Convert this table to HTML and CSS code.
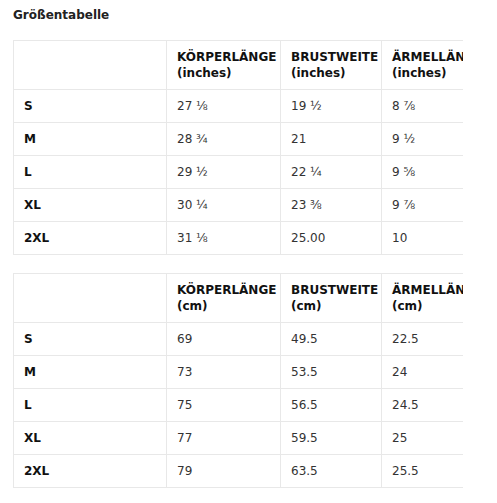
FILE: index.html
```html
<!DOCTYPE html>
<html lang="de">
  <head>
    <meta charset="UTF-8" />
    <meta name="viewport" content="width=device-width, initial-scale=1.0" />
    <title>Größentabelle</title>
    <link rel="stylesheet" href="styles.css">
  </head>
  <body>
    <div class="container">
      <h3 class="title">Größentabelle</h3>
      <div class="table-wrap">
        <table class="size-table">
          <colgroup>
            <col class="col-size" />
            <col class="col-body" />
            <col class="col-chest" />
            <col class="col-sleeve" />
          </colgroup>
          <thead>
            <tr>
              <th></th>
              <th>KÖRPERLÄNGE<br />(inches)</th>
              <th>BRUSTWEITE<br />(inches)</th>
              <th>ÄRMELLÄNGE<br />(inches)</th>
            </tr>
          </thead>
          <tbody>
            <tr><td class="size">S</td><td>27 ⅛</td><td>19 ½</td><td>8 ⅞</td></tr>
            <tr><td class="size">M</td><td>28 ¾</td><td>21</td><td>9 ½</td></tr>
            <tr><td class="size">L</td><td>29 ½</td><td>22 ¼</td><td>9 ⅝</td></tr>
            <tr><td class="size">XL</td><td>30 ¼</td><td>23 ⅜</td><td>9 ⅞</td></tr>
            <tr><td class="size">2XL</td><td>31 ⅛</td><td>25.00</td><td>10</td></tr>
          </tbody>
        </table>
      </div>
      <div class="table-wrap">
        <table class="size-table">
          <colgroup>
            <col class="col-size" />
            <col class="col-body" />
            <col class="col-chest" />
            <col class="col-sleeve" />
          </colgroup>
          <thead>
            <tr>
              <th></th>
              <th>KÖRPERLÄNGE<br />(cm)</th>
              <th>BRUSTWEITE<br />(cm)</th>
              <th>ÄRMELLÄNGE<br />(cm)</th>
            </tr>
          </thead>
          <tbody>
            <tr><td class="size">S</td><td>69</td><td>49.5</td><td>22.5</td></tr>
            <tr><td class="size">M</td><td>73</td><td>53.5</td><td>24</td></tr>
            <tr><td class="size">L</td><td>75</td><td>56.5</td><td>24.5</td></tr>
            <tr><td class="size">XL</td><td>77</td><td>59.5</td><td>25</td></tr>
            <tr><td class="size">2XL</td><td>79</td><td>63.5</td><td>25.5</td></tr>
          </tbody>
        </table>
      </div>
    </div>
  </body>
</html>
```

FILE: styles.css
```css
* {
  padding: 0;
  margin: 0;
}
body {
  font-family: "DejaVu Sans", sans-serif;
  color: #222;
  background: #fff;
}
.container {
  width: 450px;
  padding: 6px 13px;
}
.title {
  font-size: 12px;
  font-weight: bold;
  line-height: 18px;
  margin-bottom: 16px;
}
.table-wrap {
  width: 450px;
  overflow: hidden;
  margin-bottom: 18px;
}
.size-table {
  border-collapse: collapse;
  table-layout: fixed;
  width: 480px;
  font-size: 12px;
  line-height: 16px;
}
.col-size {
  width: 153px;
}
.col-body {
  width: 114px;
}
.col-chest {
  width: 101px;
}
.col-sleeve {
  width: 112px;
}
.size-table th,
.size-table td {
  border: 1px solid #e8e8e8;
  padding: 8px 10px;
  text-align: left;
  white-space: nowrap;
  vertical-align: top;
}
.size-table th {
  font-weight: bold;
  color: #111;
}
.size-table td {
  color: #333;
}
.size-table td.size {
  font-weight: bold;
  color: #111;
}
```
